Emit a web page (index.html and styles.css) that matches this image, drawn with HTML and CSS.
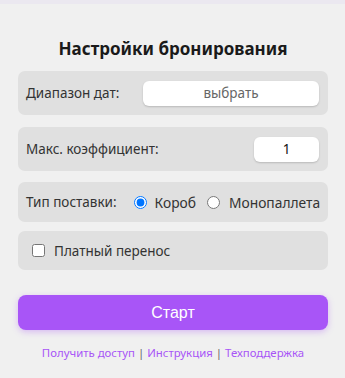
FILE: index.html
```html
<!DOCTYPE html>
<html lang="ru">
<head>
<meta charset="utf-8">
<link rel="stylesheet" href="styles.css">
</head>
<body>
<div class="topbar"></div>
<main class="panel">
  <h1 class="title">Настройки бронирования</h1>
  <div class="card card-input">
    <span class="label">Диапазон дат:</span>
    <button class="field field-wide">выбрать</button>
  </div>
  <div class="card card-input">
    <span class="label">Макс. коэффициент:</span>
    <input class="field field-num" type="text" value="1">
  </div>
  <div class="card card-row">
    <span class="label">Тип поставки:</span>
    <label class="opt first"><input type="radio" name="t" checked><span>Короб</span></label>
    <label class="opt second"><input type="radio" name="t"><span>Монопаллета</span></label>
  </div>
  <div class="card card-row card-last">
    <label class="opt check"><input type="checkbox"><span>Платный перенос</span></label>
  </div>
  <button class="start">Старт</button>
  <p class="links"><a>Получить доступ</a> <span class="sep">|</span> <a>Инструкция</a> <span class="sep">|</span> <a>Техподдержка</a></p>
</main>
</body>
</html>
```
FILE: styles.css
```css
html, body {
  margin: 0;
  padding: 0;
  background: #f0f0f0;
}
body {
  font-family: "Noto Sans", "Open Sans", sans-serif;
  color: #333;
}
.topbar {
  height: 4px;
  background: #ebe8f0;
}
.panel {
  padding: 0 17px 0 18px;
  display: flex;
  flex-direction: column;
}
.title {
  margin: 33px 0 11px;
  font-size: 17px;
  line-height: 23px;
  font-weight: 700;
  text-align: center;
  color: #1a1a1a;
}
.card {
  background: #e0e0e0;
  border-radius: 7px;
  display: flex;
  align-items: center;
  padding: 0 9px 0 8px;
  white-space: nowrap;
}
.card-input {
  height: 44px;
  justify-content: space-between;
  margin-bottom: 12px;
}
.card-input + .card-row {
  margin-top: -1px;
}
.card-row {
  height: 40px;
  margin-bottom: 9px;
}
.card-last {
  height: 39px;
}
.label {
  font-size: 13.5px;
  color: #333;
  flex-shrink: 0;
}
.field {
  height: 25px;
  box-sizing: border-box;
  border: none;
  border-radius: 6px;
  background: #fff;
  box-shadow: 0 1px 2px rgba(0,0,0,0.18);
  font-family: "Noto Sans", sans-serif;
  font-size: 13.5px;
  text-align: center;
  padding: 0;
}
.field-wide {
  width: 176px;
  color: #666;
}
.field-num {
  width: 65px;
  color: #111;
}
.opt {
  display: flex;
  align-items: center;
  font-size: 13.8px;
  color: #333;
  flex-shrink: 0;
}
.opt input {
  width: 13px;
  height: 13px;
  flex-shrink: 0;
}
.first input {
  margin: 0 8px 0 17px;
}
.second input {
  margin: 0 9px 0 11px;
}
.check input {
  margin: 0 9px 0 6px;
}
.check {
  font-size: 13.5px;
}
.start {
  margin-top: 16px;
  height: 35px;
  border: none;
  border-radius: 8px;
  background: #a855f7;
  color: #fff;
  font-family: "Liberation Sans", Arial, sans-serif;
  font-size: 16px;
  box-shadow: 0 2px 6px rgba(168,85,247,0.35);
}
.links {
  margin: 15px 0 0;
  text-align: center;
  font-size: 11.4px;
}
.links a {
  color: #a855f7;
}
.sep {
  color: #666;
}
```
